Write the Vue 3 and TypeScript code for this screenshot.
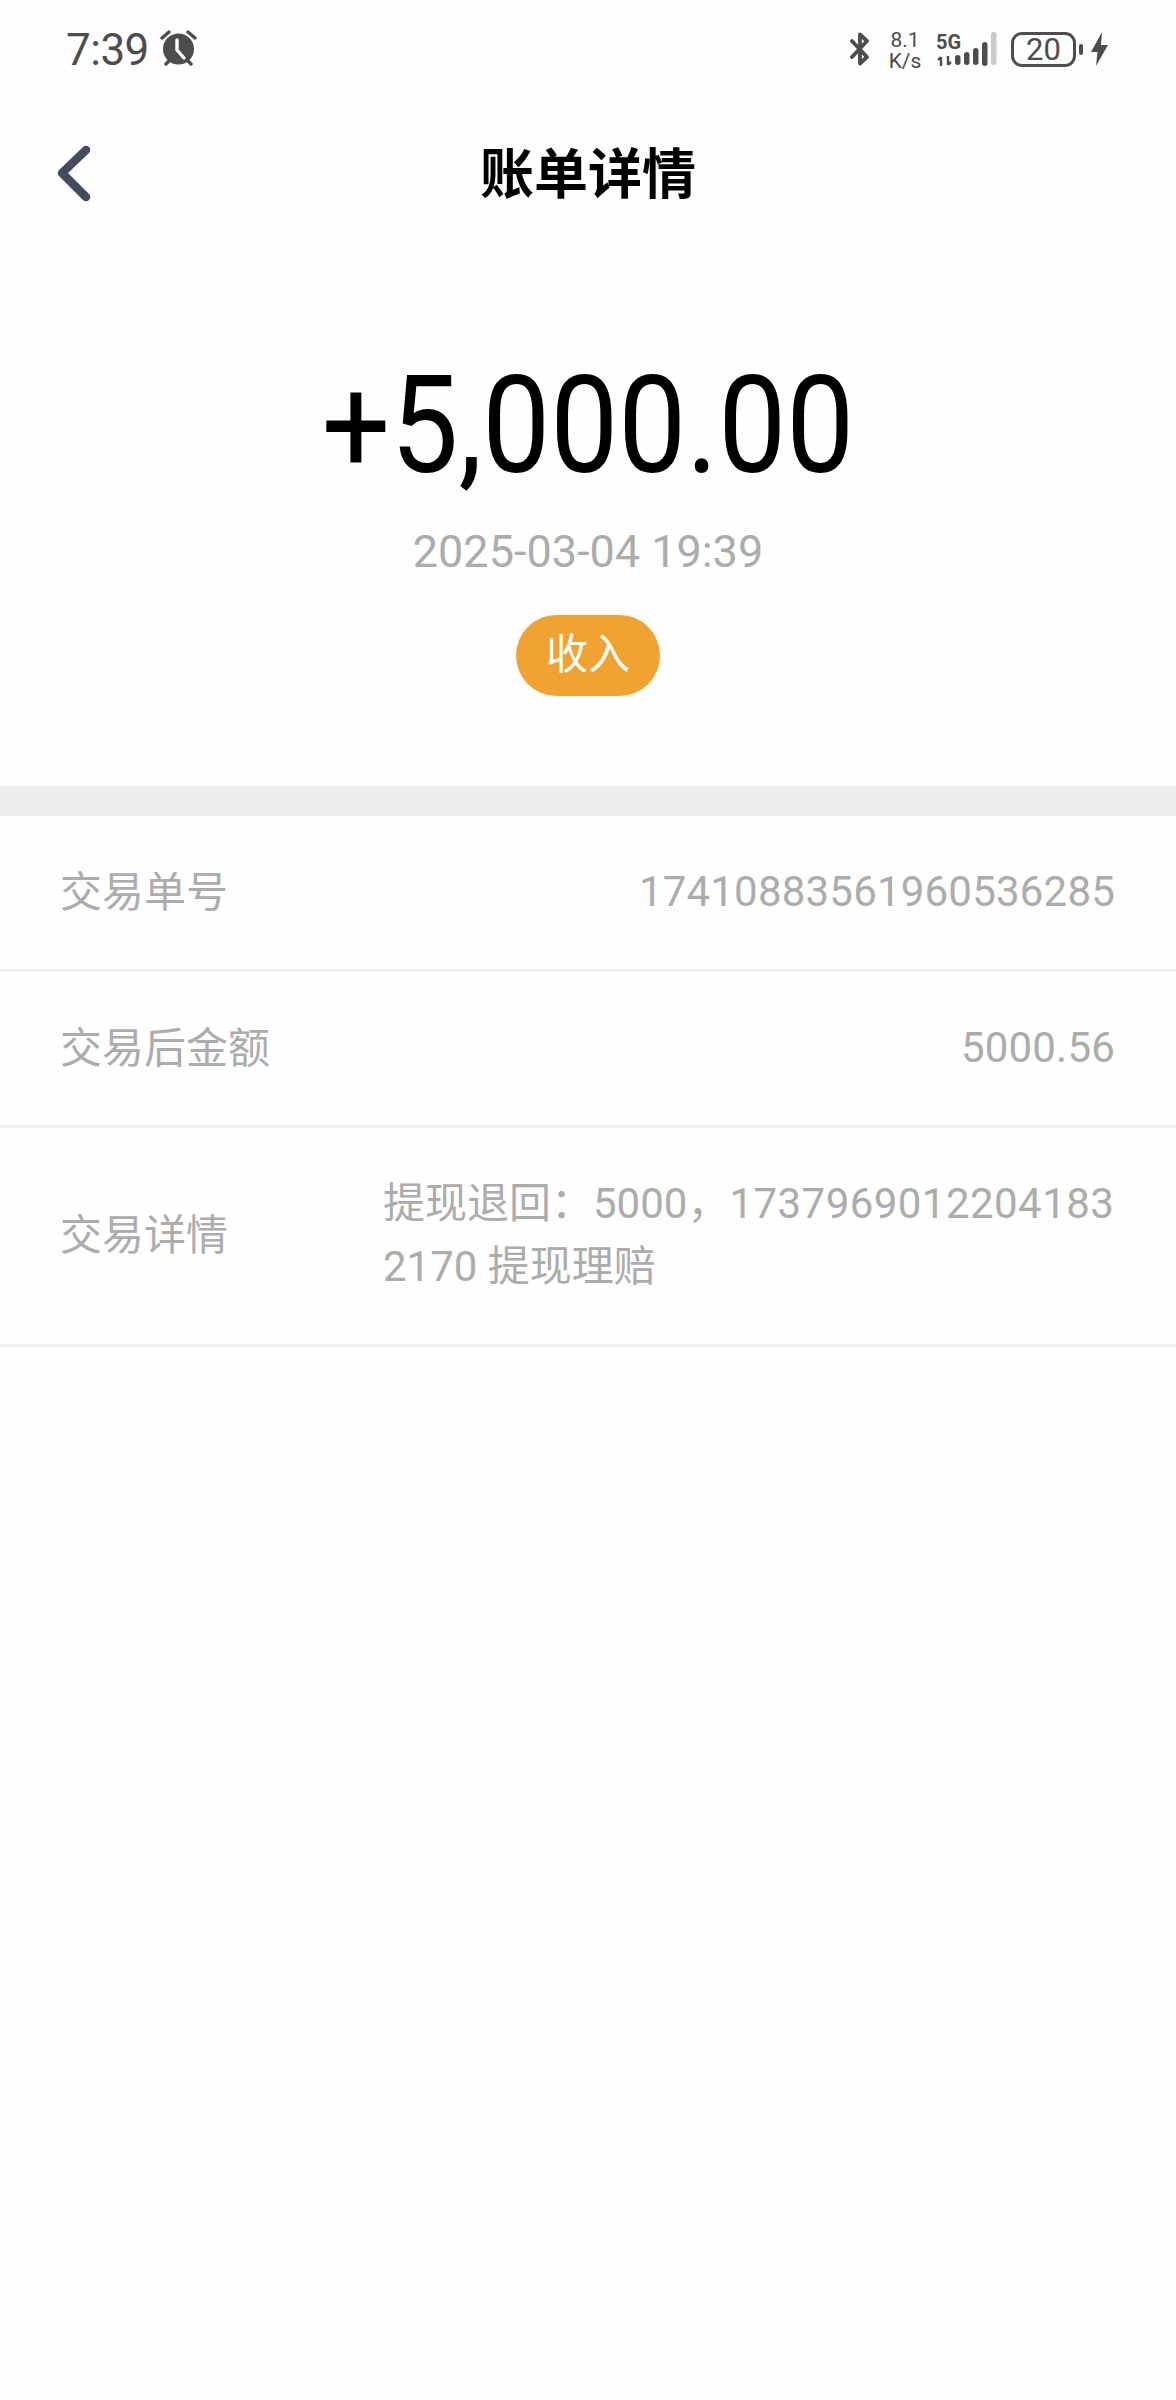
<script setup lang="ts">
const rows = [
  { label: '交易单号', value: '17410883561960536285' },
  { label: '交易后金额', value: '5000.56' },
]
const bars = [
  { x: 0, y: 15, h: 10 },
  { x: 9, y: 12, h: 13 },
  { x: 18, y: 8, h: 17 },
  { x: 27, y: 2, h: 24 },
]
</script>

<template>
  <div class="page">
    <div class="status">
      <span class="time">7:39</span>
      <svg class="alarm" width="38" height="36" viewBox="0 0 38 36">
        <circle cx="18.5" cy="19" r="15.5" fill="#4d4d4d" />
        <path d="M17 10v10l7 8" fill="none" stroke="#fff" stroke-width="3.4" stroke-linecap="round" stroke-linejoin="round" />
        <path d="M2 8l7-6M35 8l-7-6M6 34l4-4M31 34l-4-4" stroke="#4d4d4d" stroke-width="3.4" stroke-linecap="round" />
      </svg>
      <div class="status-right">
        <svg class="bt" width="22" height="34" viewBox="0 0 22 34">
          <path d="M3 9l15 16-7 6.500V2.500l7 6.500L3 25" fill="none" stroke="#4d4d4d" stroke-width="3.800" stroke-linejoin="round" stroke-linecap="round" />
        </svg>
        <div class="speed"><span>8.1</span><span>K/s</span></div>
        <div class="net">
          <span class="five-g">5G</span>
          <svg class="arrows" width="18" height="12" viewBox="0 0 18 12">
            <path d="M5 11V2M2 5l3-3M12 1v9M15 7l-3 3" fill="none" stroke="#4d4d4d" stroke-width="2.400" />
          </svg>
        </div>
        <svg class="signal" width="42" height="34" viewBox="0 0 42 34">
          <rect v-for="b in bars" :key="b.x" :x="b.x" :y="b.y + 8" width="5.500" :height="b.h" rx="2.700" fill="#4d4d4d" />
          <rect x="36" y="0" width="5.500" height="33" rx="2.700" fill="#c9c9c9" />
        </svg>
        <div class="battery">20</div>
        <span class="nub"></span>
        <svg class="bolt" width="17" height="34" viewBox="0 0 17 34">
          <path d="M11 0L0 20h6.500L5 34l12-21h-7z" fill="#4d4d4d" />
        </svg>
      </div>
    </div>

    <div class="nav">
      <svg class="back" width="36" height="60" viewBox="0 0 36 60">
        <path d="M29 6L5 29l24 24" fill="none" stroke="#434b5c" stroke-width="8.500" stroke-linecap="round" stroke-linejoin="round" />
      </svg>
      <h1>账单详情</h1>
    </div>

    <div class="summary">
      <div class="amount">+5,000.00</div>
      <div class="date">2025-03-04 19:39</div>
      <div class="tag">收入</div>
    </div>

    <div class="band"></div>

    <div v-for="r in rows" :key="r.label" class="row">
      <span class="label">{{ r.label }}</span>
      <span class="value">{{ r.value }}</span>
    </div>
    <div class="row detail">
      <span class="label">交易详情</span>
      <p class="detail-text">提现退回：5000，<span class="digits">1737969012204183</span><br />2170 提现理赔</p>
    </div>
  </div>
</template>

<style>
html, body { margin: 0; background: #fefefe; }
</style>

<style scoped>
.page {
  width: 1176px;
  height: 2400px;
  background: #fefefe;
  font-family: Roboto, "Noto Sans CJK SC", sans-serif;
  overflow: hidden;
}
.status {
  height: 100px;
  box-sizing: border-box;
  padding: 27px 68px 0 66px;
  display: flex;
  align-items: flex-start;
  color: #4d4d4d;
}
.time { font-size: 44px; line-height: 46px; letter-spacing: -0.5px; }
.alarm { margin: 3px 0 0 11px; }
.status-right { margin-left: auto; display: flex; align-items: flex-start; padding-top: 5px; }
.speed { display: flex; flex-direction: column; align-items: center; width: 32px; margin: -2px 0 0 18px; font-size: 21px; line-height: 21px; }
.net { width: 24px; margin-left: 15px; display: flex; flex-direction: column; }
.five-g { font-size: 20px; font-weight: 700; line-height: 18px; margin-top: 1px; }
.arrows { margin-top: 4px; }
.signal { margin-left: -5px; }
.battery {
  width: 65px;
  height: 35px;
  margin-left: 14px;
  box-sizing: border-box;
  border: 3px solid #4d4d4d;
  border-radius: 11px;
  text-align: center;
  font-size: 31px;
  line-height: 29px;
}
.nub { width: 4px; height: 11px; margin: 12px 0 0 3px; background: #4d4d4d; border-radius: 2px; }
.bolt { margin-left: 8px; }
.nav {
  position: relative;
  height: 150px;
  display: flex;
  align-items: center;
  justify-content: center;
}
.back { position: absolute; left: 57px; top: 44px; }
h1 { margin: 2px 0 0; font-size: 54px; line-height: 64px; font-weight: 700; color: #000; }
.summary {
  height: 536px;
  box-sizing: border-box;
  padding-top: 106px;
  display: flex;
  flex-direction: column;
  align-items: center;
}
.amount { font-size: 121px; line-height: 140px; color: #000; transform: scaleY(1.12); }
.date { margin-top: 31px; font-size: 45px; line-height: 50px; color: #acacac; }
.tag {
  margin-top: 38px;
  width: 144px;
  height: 81px;
  border-radius: 41px;
  background: #f0a332;
  color: #fff;
  font-size: 42px;
  line-height: 80px;
  text-align: center;
}
.band { height: 30px; background: #eeeeee; }
.row {
  height: 153px;
  padding: 0 61px 0 60px;
  display: flex;
  align-items: center;
  justify-content: space-between;
  font-size: 42px;
  color: #acacac;
  border-bottom: 3px solid #eeeeee;
}
.label { flex: none; margin-bottom: 9px; }
.value { letter-spacing: 0.2px; margin-bottom: 3px; }
.detail { height: 216px; justify-content: flex-start; }
.detail .label { width: 323px; }
.detail-text { margin: 0 0 3px; line-height: 63px; white-space: nowrap; }
.digits { letter-spacing: 0.45px; }
</style>
